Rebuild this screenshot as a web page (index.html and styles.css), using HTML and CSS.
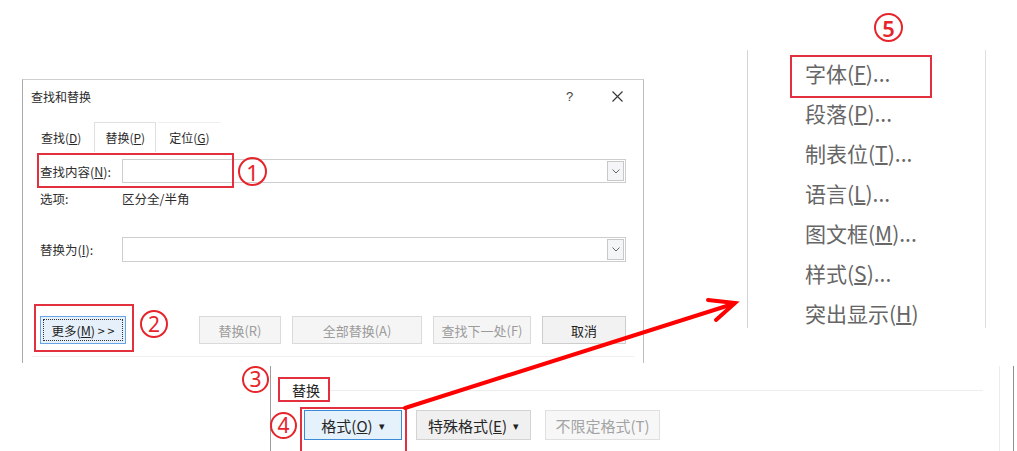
FILE: index.html
```html
<!DOCTYPE html>
<html lang="zh-CN">
<head>
<meta charset="utf-8">
<title>查找和替换</title>
<link rel="stylesheet" href="styles.css">
</head>
<body>
<div class="canvas">

  <section class="dialog">
    <header class="titlebar">
      <span class="title">查找和替换</span>
      <span class="tb-btns">
        <span class="help">?</span>
        <svg class="close" width="11" height="11" viewBox="0 0 11 11"><path d="M0.5 0.5L10.5 10.5M10.5 0.5L0.5 10.5" stroke="#333" stroke-width="1.1" fill="none"/></svg>
      </span>
    </header>
    <nav class="tabs">
      <span class="tab">查找(<u>D</u>)</span>
      <span class="tab active">替换(<u>P</u>)</span>
      <span class="tab faint">定位(<u>G</u>)</span>
    </nav>
    <div class="form">
      <div class="row field-row">
        <span class="lbl">查找内容(<u>N</u>):</span>
        <div class="combo">
          <span class="combo-btn"><svg width="8" height="5" viewBox="0 0 8 5"><path d="M0.5 0.5L4 4L7.5 0.5" stroke="#666" fill="none"/></svg></span>
        </div>
      </div>
      <div class="row opts-row">
        <span class="lbl">选项:</span>
        <span class="val">区分全/半角</span>
      </div>
      <div class="row field-row repl">
        <span class="lbl">替换为(<u>I</u>):</span>
        <div class="combo">
          <span class="combo-btn"><svg width="8" height="5" viewBox="0 0 8 5"><path d="M0.5 0.5L4 4L7.5 0.5" stroke="#666" fill="none"/></svg></span>
        </div>
      </div>
      <div class="buttons">
        <div class="btn more"><span class="focus"><span>更多(<u>M</u>) &gt; &gt;</span></span></div>
        <div class="btn-group">
          <div class="btn disabled w82">替换(R)</div>
          <div class="btn disabled w130">全部替换(A)</div>
          <div class="btn disabled w98">查找下一处(F)</div>
          <div class="btn cancel w84">取消</div>
        </div>
      </div>
      <div class="sep"></div>
    </div>
  </section>

  <section class="menu">
    <div class="item">字体(<u>F</u>)...</div>
    <div class="item">段落(<u>P</u>)...</div>
    <div class="item">制表位(<u>T</u>)...</div>
    <div class="item">语言(<u>L</u>)...</div>
    <div class="item">图文框(<u>M</u>)...</div>
    <div class="item">样式(<u>S</u>)...</div>
    <div class="item">突出显示(<u>H</u>)</div>
  </section>

  <section class="bottom">
    <div class="group">
      <div class="group-head">
        <span class="group-label">替换</span>
        <span class="group-line"></span>
      </div>
      <div class="fmt-buttons">
        <div class="fbtn active"><span>格式(<u>O</u>)</span><span class="caret">▾</span></div>
        <div class="fbtn"><span>特殊格式(<u>E</u>)</span><span class="caret">▾</span></div>
        <div class="fbtn disabled"><span>不限定格式(T)</span></div>
      </div>
    </div>
  </section>

  <div class="mark box1"></div>
  <div class="mark box2"></div>
  <div class="mark box3"></div>
  <div class="mark box4"></div>
  <div class="mark box5"></div>

  <span class="num n1">1</span>
  <span class="num n2">2</span>
  <span class="num n3">3</span>
  <span class="num n4">4</span>
  <span class="num n5">5</span>

  <svg class="arrow" width="1017" height="451" viewBox="0 0 1017 451">
    <line x1="405" y1="408" x2="733" y2="304" stroke="#ff0000" stroke-width="4" stroke-linecap="round"/>
    <polyline points="708,300 735,303 716,320" stroke="#ff0000" stroke-width="4" fill="none" stroke-linecap="round" stroke-linejoin="miter"/>
  </svg>
</div>
</body>
</html>
```

FILE: styles.css
```css
* { box-sizing: border-box; }

html, body {
  margin: 0;
  padding: 0;
  background: #ffffff;
}

body {
  font-family: "Noto Sans CJK SC", "Noto Sans", "Liberation Sans", sans-serif;
  color: #2b2b2b;
}

u { text-decoration: underline; text-underline-offset: 1px; }

.canvas {
  position: relative;
  width: 1017px;
  height: 451px;
  overflow: hidden;
  background: #ffffff;
}

/* ---------- Find & Replace dialog ---------- */
.dialog {
  position: absolute;
  left: 22px;
  top: 79px;
  width: 622px;
  height: 284px;
  border-top: 1px solid #cfcfcf;
  border-left: 1px solid #a9a9a9;
  border-right: 1px solid #bdbdbd;
  background: #ffffff;
  display: flex;
  flex-direction: column;
}

.titlebar {
  height: 33px;
  display: flex;
  align-items: center;
  justify-content: space-between;
  padding: 0 20px 0 8px;
}

.title {
  font-size: 12px;
  color: #2a2a2a;
}

.tb-btns {
  display: flex;
  align-items: center;
  gap: 40px;
}

.help {
  font-family: "Liberation Sans", sans-serif;
  font-size: 13px;
  color: #444;
  width: 6px;
}

.close { display: block; }

.tabs {
  margin-top: 9px;
  height: 30px;
  display: flex;
  gap: 2px;
  padding-left: 7px;
}

.tab {
  padding: 0 10px;
  font-size: 12px;
  line-height: 29px;
  color: #2a2a2a;
  border: 1px solid transparent;
  border-bottom: none;
}

.tab.active {
  border-color: #e0e0e0;
  background: #ffffff;
}

.tab.faint {
  border-top-color: #eeeeee;
}

.form {
  padding: 0 17px;
  display: flex;
  flex-direction: column;
}

.row {
  display: flex;
  align-items: center;
}

.lbl {
  width: 82px;
  flex: none;
  font-size: 12.5px;
  color: #2e2e2e;
}

.field-row {
  margin-top: 7px;
  height: 24px;
}

.field-row.repl {
  margin-top: 31px;
  height: 25px;
}

.combo {
  flex: 1;
  height: 100%;
  border: 1px solid #cdcdcd;
  background: #fff;
  display: flex;
  justify-content: flex-end;
  padding: 1px;
}

.combo-btn {
  width: 17px;
  height: 100%;
  border: 1px solid #c8c8c8;
  background: #f3f5f7;
  display: flex;
  align-items: center;
  justify-content: center;
}

.combo-btn svg { display: block; }

.opts-row {
  margin-top: 7px;
  height: 16px;
  font-size: 12.5px;
}

.val { color: #2e2e2e; }

.buttons {
  margin-top: 54px;
  height: 28px;
  display: flex;
  justify-content: space-between;
}

.btn {
  height: 28px;
  display: flex;
  align-items: center;
  justify-content: center;
  font-size: 13px;
  border: 1px solid #d6d6d6;
  background: #f3f3f3;
}

.btn.more {
  width: 86px;
  border: 1px solid #6aa5e3;
  background: #e6f0fa;
  padding: 2px;
}

.btn.more .focus {
  width: 100%;
  height: 100%;
  border: 1px dotted #333;
  display: flex;
  align-items: center;
  justify-content: center;
  color: #222;
  font-size: 12.5px;
}

.btn-group {
  display: flex;
  gap: 11px;
}

.btn.disabled {
  color: #9b9b9b;
  background: #f5f5f5;
  border-color: #dadada;
}

.btn.cancel {
  color: #1e1e1e;
  background: #f2f2f2;
  border-color: #cdcdcd;
}

.w82 { width: 82px; }
.w130 { width: 130px; }
.w98 { width: 98px; }
.w84 { width: 84px; }

.sep {
  margin: 12px -8px 0 -8px;
  height: 1px;
  background: #efefef;
}

/* ---------- Format dropdown menu ---------- */
.menu {
  position: absolute;
  left: 747px;
  top: 50px;
  width: 239px;
  height: 278px;
  border-left: 1px solid #d4d4d4;
  border-right: 1px solid #dedede;
  padding: 3px 0 0 57px;
  background: #ffffff;
}

.item {
  font-size: 21px;
  line-height: 40px;
  height: 40px;
  color: #666666;
  white-space: nowrap;
}

/* ---------- Bottom "替换" group ---------- */
.bottom {
  position: absolute;
  left: 270px;
  top: 366px;
  width: 744px;
  height: 85px;
  border-left: 1px solid #9d9d9d;
  border-right: 1px solid #8f8f8f;
  padding-right: 13px;
  background: #fff;
}

.group {
  height: 100%;
  border-right: 1px solid #ececec;
  display: flex;
  flex-direction: column;
}

.group-head {
  margin-top: 13px;
  height: 22px;
  display: flex;
  align-items: center;
  padding: 0 16px 0 21px;
  gap: 10px;
}

.group-label {
  font-size: 14px;
  color: #222;
}

.group-line {
  flex: 1;
  height: 1px;
  background: #eeeeee;
}

.fmt-buttons {
  margin-top: 9px;
  display: flex;
  gap: 14px;
  padding-left: 33px;
}

.fbtn {
  height: 30px;
  width: 115px;
  display: flex;
  align-items: center;
  justify-content: center;
  gap: 6px;
  font-size: 15px;
  color: #262626;
  background: #f0f0f0;
  border: 1px solid #d3d3d3;
}

.fbtn.active {
  width: 98px;
  background: #e5f1fb;
  border: 1px solid #3d8ad6;
}

.fbtn.disabled {
  color: #a3a3a3;
  background: #f7f7f7;
  border-color: #e0e0e0;
}

.caret {
  font-size: 11px;
  color: #222;
}

/* ---------- Annotations ---------- */
.mark {
  position: absolute;
  border: 2px solid #e2303f;
}

.box1 { left: 37px; top: 153px; width: 197px; height: 35px; }
.box2 { left: 34px; top: 304px; width: 100px; height: 48px; }
.box3 { left: 278px; top: 377px; width: 52px; height: 25px; }
.box4 { left: 300px; top: 407px; width: 107px; height: 52px; }
.box5 { left: 790px; top: 55px; width: 142px; height: 43px; }

.num {
  position: absolute;
  border: 2px solid #e6252b;
  border-radius: 50%;
  color: #e6252b;
  font-family: "Noto Sans", "Liberation Sans", sans-serif;
  display: flex;
  align-items: center;
  justify-content: center;
  line-height: 1;
}

.n1 { left: 238px; top: 157px; width: 29px; height: 29px; font-size: 22px; }
.n2 { left: 140px; top: 310px; width: 28px; height: 28px; font-size: 21px; }
.n3 { left: 242px; top: 366px; width: 27px; height: 27px; font-size: 21px; }
.n4 { left: 270px; top: 412px; width: 27px; height: 27px; font-size: 21px; }
.n5 { left: 874px; top: 13px; width: 29px; height: 29px; font-size: 22px; font-weight: 600; }

.arrow {
  position: absolute;
  left: 0;
  top: 0;
  pointer-events: none;
}
```
